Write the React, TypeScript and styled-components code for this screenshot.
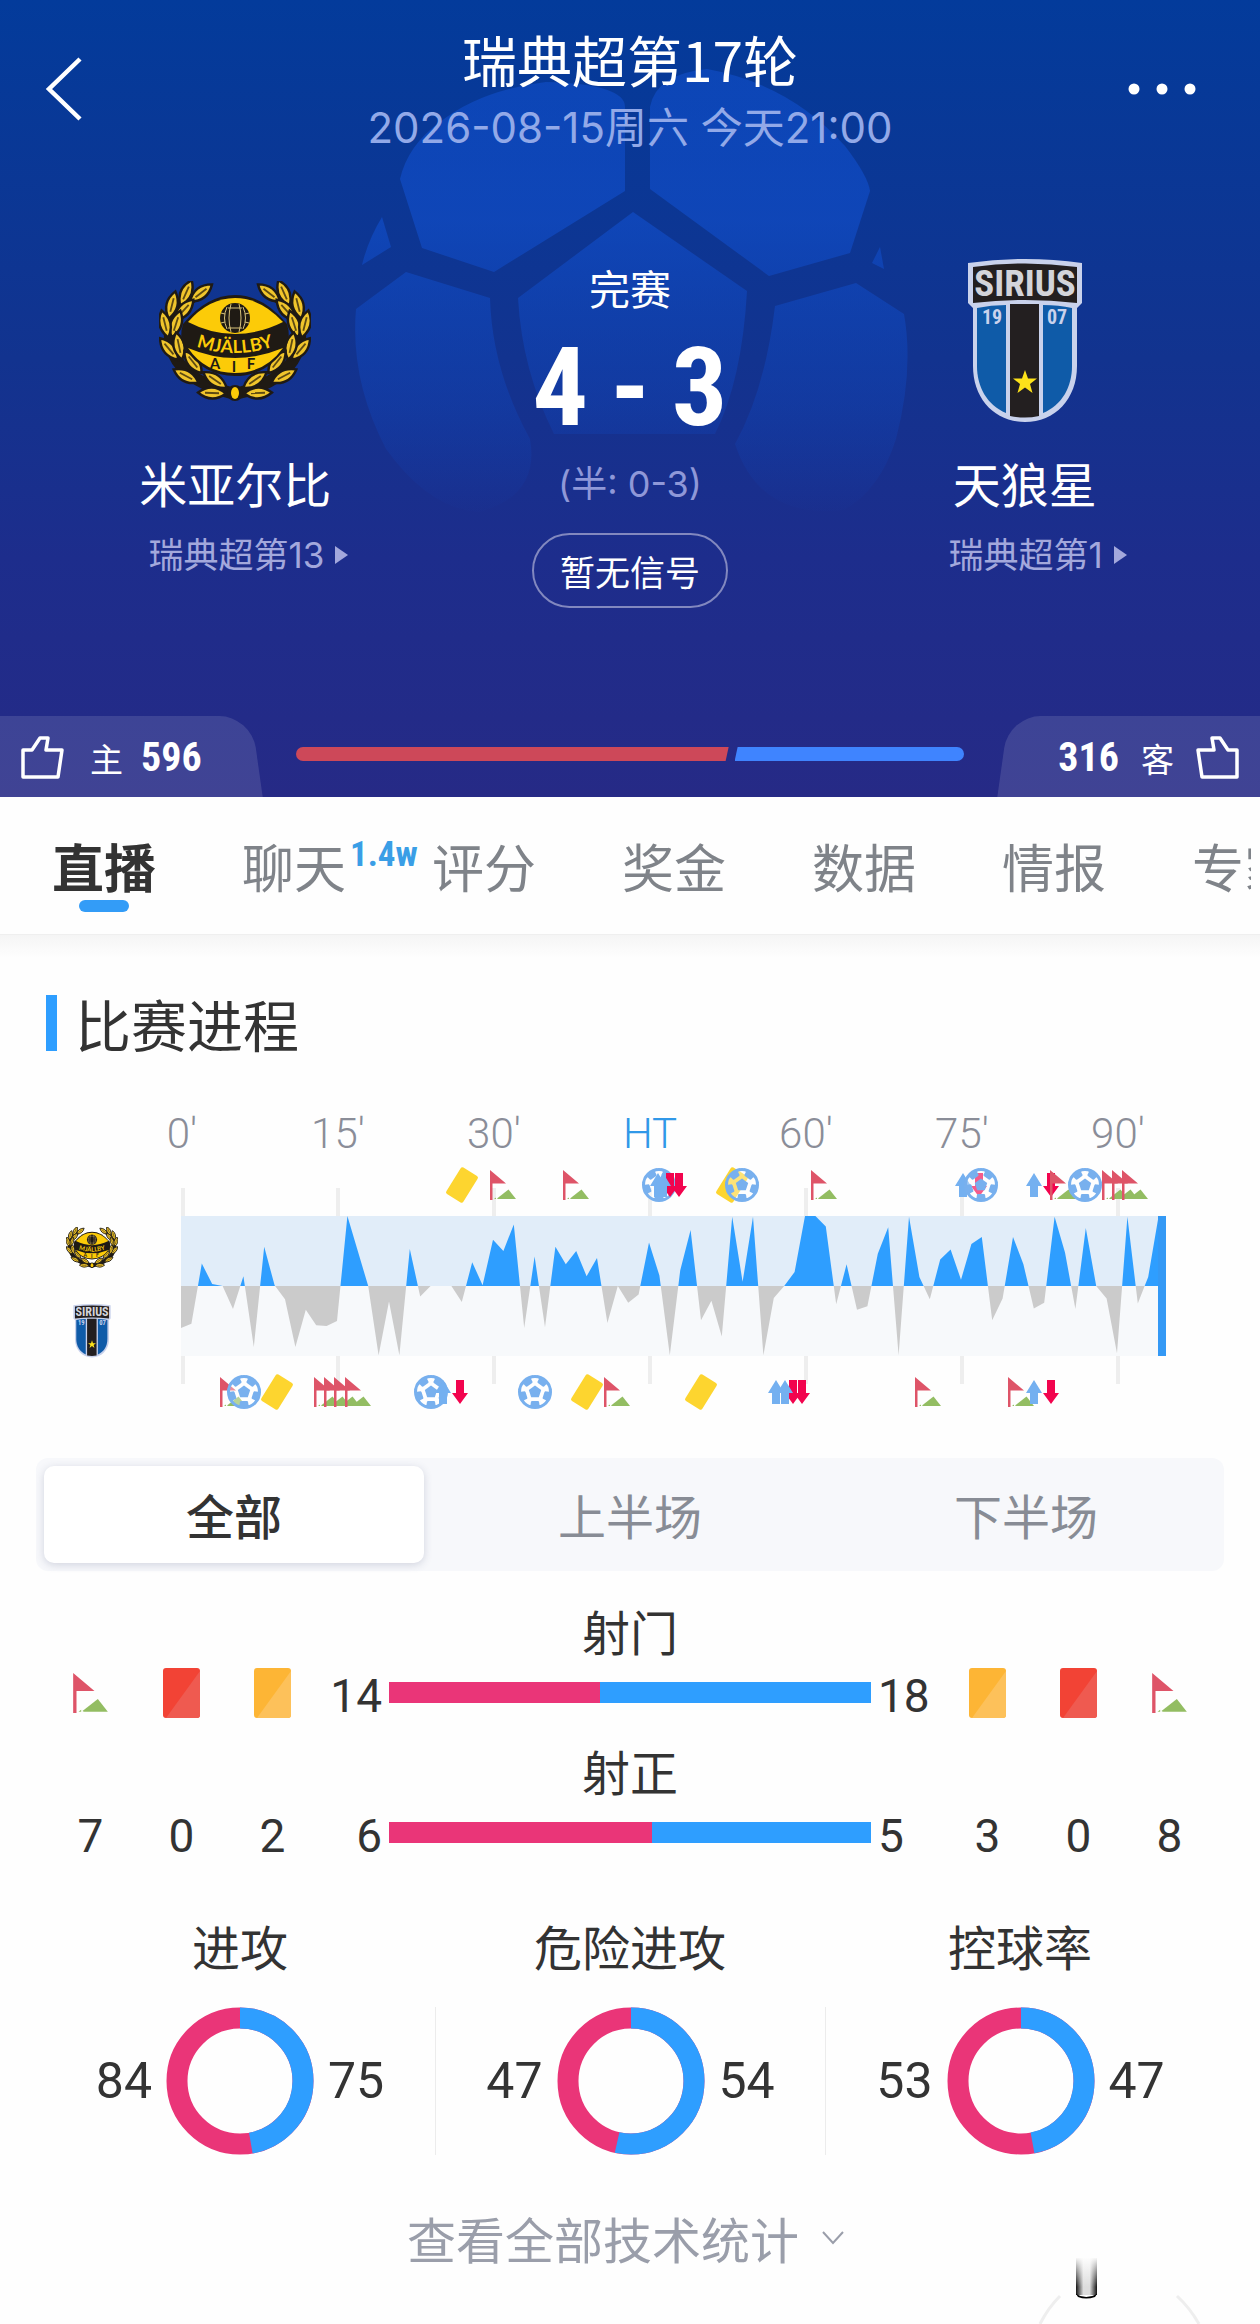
import * as React from 'react';
import { useState, useId } from 'react'
import styled, { createGlobalStyle } from 'styled-components'

const cjk = `"Noto Sans CJK SC", sans-serif`;
const narrow = `"Roboto Condensed", "Roboto", ${cjk}`;
const PINK = '#ea3578';
const BLUE = '#2e9eff';

const GlobalStyle = createGlobalStyle`
  * { box-sizing: border-box; }
  body {
    margin: 0;
    background: #fefefe;
    color: #333;
    font-family: "Inter", ${cjk};
  }
  h1, h2, h3, p { margin: 0; font-weight: 400; }
  a { color: inherit; text-decoration: none; }
  button {
    border: 0;
    padding: 0;
    background: none;
    color: inherit;
    font: inherit;
    cursor: pointer;
  }
  svg { display: block; }
`

const Page = styled.div`
  position: relative;
  overflow: hidden;
  padding-bottom: 56px;
`

/* ---------- hero ---------- */

const Hero = styled.header`
  position: relative;
  padding-top: 26px;
  color: #fff;
  background: linear-gradient(180deg, #033b9b 0%, #12338f 45%, #1d2d8c 70%, #262a86 100%);
`

const HeroBall = styled.svg`
  position: absolute;
  left: 50%;
  top: 60px;
  width: 560px;
  height: 460px;
  margin-left: -278px;
`

const TopBar = styled.div`
  position: relative;
  display: grid;
  grid-template-columns: 140px 1fr 140px;
  align-items: center;
`

const IconButton = styled.button<{ $end?: boolean }>`
  display: flex;
  justify-content: ${p => p.$end ? 'flex-end' : 'flex-start'};
  padding: ${p => p.$end ? '0 64px 0 0' : '0 0 0 44px'};

  svg { flex: none; }
`

const Titles = styled.div`
  text-align: center;

  h1 {
    font-family: ${cjk};
    font-size: 55px;
    line-height: 64px;
  }
  p {
    margin-top: 14px;
    font-size: 42px;
    line-height: 48px;
    color: #92a9e8;
  }
`

const Teams = styled.div`
  position: relative;
  display: grid;
  grid-template-columns: repeat(3, 1fr);
  margin-top: 107px;
  padding: 0 38px;
`

const Team = styled.section`
  display: flex;
  flex-direction: column;
  align-items: center;

  h2 {
    margin-top: 33px;
    font-size: 48px;
    line-height: 60px;
  }
`

const CrestBox = styled.div`
  display: flex;
  align-items: center;
  height: 164px;
`

const RankLink = styled.a`
  display: flex;
  align-items: center;
  gap: 11px;
  margin-top: 17px;
  padding-left: 26px;
  font-size: 35px;
  line-height: 44px;
  color: #a3a8dc;
`

const Center = styled.section`
  display: flex;
  flex-direction: column;
  align-items: center;
  padding-top: 7px;
`

const Status = styled.p`
  font-size: 41px;
  line-height: 48px;
`

const Score = styled.p`
  display: flex;
  gap: 22px;
  margin-top: 24px;
  font-family: ${narrow};
  font-weight: 700;
  font-size: 110px;
  line-height: 100px;
`

const Half = styled.p`
  margin-top: 24px;
  font-size: 36px;
  line-height: 44px;
  color: #8f98d8;
`

const Signal = styled.button`
  height: 75px;
  margin-top: 27px;
  padding: 0 26px;
  border: 2px solid #8288bf;
  border-radius: 38px;
  font-size: 35px;
`

const Votes = styled.div`
  position: relative;
  display: flex;
  align-items: center;
  justify-content: space-between;
  height: 81px;
  margin-top: 108px;
`

const Vote = styled.button<{ $away?: boolean }>`
  position: relative;
  display: flex;
  flex-direction: ${p => p.$away ? 'row-reverse' : 'row'};
  align-items: center;
  gap: ${p => p.$away ? 22 : 18}px;
  width: 263px;
  height: 81px;
  padding: 2px 20px 0;
  font-size: 33px;

  &::before {
    content: '';
    position: absolute;
    inset: 0 ${p => p.$away ? '-20px' : '6px'} 0 ${p => p.$away ? '6px' : '-20px'};
    background: rgba(255, 255, 255, 0.12);
    border-radius: ${p => p.$away ? '32px 0 0 0' : '0 32px 0 0'};
    transform: skewX(${p => p.$away ? '-8deg' : '8deg'});
  }
  svg, span, b { position: relative; }
  span { font-family: ${cjk}; }
  svg { margin: ${p => p.$away ? '0' : '0 8px 0 0'}; }
  b {
    font-family: ${narrow};
    font-size: 40px;
  }
`

const VoteTrack = styled.div`
  flex: 1;
  display: flex;
  gap: 6px;
  height: 14px;
  margin: 0 33px 5px;
`

const VoteFill = styled.div<{ $away?: boolean }>`
  background: ${p => p.$away ? '#3f84ff' : '#cd4859'};
  border-radius: ${p => p.$away ? '0 7px 7px 0' : '7px 0 0 7px'};
  clip-path: ${p => p.$away
    ? 'polygon(3px 0, 100% 0, 100% 100%, 0 100%)'
    : 'polygon(0 0, 100% 0, calc(100% - 3px) 100%, 0 100%)'};
`

/* ---------- tabs ---------- */

const TabBar = styled.nav`
  display: flex;
  height: 137px;
  margin-right: 9px;
  padding-left: 9px;
  overflow: hidden;
`

const TabItem = styled.button<{ $active: boolean }>`
  position: relative;
  flex: 0 0 190px;
  font-family: ${cjk};
  font-size: 52px;
  line-height: 137px;
  font-weight: ${p => p.$active ? 700 : 400};
  color: ${p => p.$active ? '#333' : '#7f8389'};

  &::after {
    content: '';
    display: ${p => p.$active ? 'block' : 'none'};
    position: absolute;
    left: 50%;
    bottom: 22px;
    width: 50px;
    height: 12px;
    margin-left: -25px;
    border-radius: 6px;
    background: #339cf7;
  }
  sup {
    position: absolute;
    left: 151px;
    top: 40px;
    font-family: ${narrow};
    font-size: 35px;
    line-height: 36px;
    font-weight: 700;
    color: #3a9ee6;
  }
`

const Shade = styled.div`
  height: 24px;
  border-top: 1px solid #efefef;
  background: linear-gradient(180deg, #f5f5f5, #fefefe);
`

/* ---------- match progress ---------- */

const SectionTitle = styled.h2`
  display: flex;
  align-items: center;
  gap: 18px;
  margin-top: 37px;
  padding-left: 46px;
  font-family: ${cjk};
  font-size: 56px;
  line-height: 56px;

  &::before {
    content: '';
    width: 11px;
    height: 56px;
    background: ${BLUE};
  }
`

const Timeline = styled.div`
  display: flex;
  margin-top: 49px;
  padding-right: 60px;
`

const TeamMarks = styled.div`
  flex: 0 0 160px;
  display: flex;
  flex-direction: column;
  align-items: center;
  gap: 36px;
  padding: 127px 0 0 24px;
`

const Chart = styled.svg`
  flex: 1;
  min-width: 0;
  width: 100%;

  text {
    font-family: "Roboto", sans-serif;
    font-weight: 300;
    font-size: 42px;
    text-anchor: middle;
    fill: #8a8d98;
  }
  text.ht { fill: #3098e8; }
`

const Segments = styled.div`
  display: grid;
  grid-template-columns: repeat(3, 1fr);
  margin: 38px 36px 0;
  padding: 8px 0;
  border-radius: 12px;
  background: #f7f8fb;
`

const Segment = styled.button<{ $active: boolean }>`
  margin: 0 8px;
  border-radius: 10px;
  font-family: ${cjk};
  font-size: 48px;
  line-height: 97px;
  font-weight: ${p => p.$active ? 500 : 400};
  color: ${p => p.$active ? '#333' : '#888c95'};
  background: ${p => p.$active ? '#fff' : 'none'};
  box-shadow: ${p => p.$active ? '0 2px 8px rgba(60, 70, 110, 0.2)' : 'none'};
`

/* ---------- stats ---------- */

const Stats = styled.div`
  margin-top: 15px;
`

const StatRow = styled.div`
  display: grid;
  grid-template-columns: repeat(3, 91px) 1fr repeat(3, 91px);
  align-items: end;
  height: 140px;
  padding: 0 45px;
  font-family: "Roboto", ${cjk};
  font-size: 46px;
`

const Cell = styled.div`
  display: flex;
  align-items: center;
  justify-content: center;
  height: 60px;

  svg { margin-bottom: 6px; }
`

const Duel = styled.div`
  h3 {
    text-align: center;
    font-size: 48px;
    line-height: 60px;
  }
`

const DuelLine = styled.div`
  display: grid;
  grid-template-columns: 64px 1fr 64px;
  gap: 7px;
  line-height: 60px;
  margin-top: 1px;

  > :first-child { text-align: right; }
`

const DuelBar = styled.div`
  display: flex;
  height: 21px;
  margin-top: 16px;
  background: ${BLUE};

  div { background: ${PINK}; }
`

const Donuts = styled.div`
  display: grid;
  grid-template-columns: repeat(3, 1fr);
  margin-top: 53px;
  padding: 0 45px;
`

const DonutCard = styled.section`
  h3 {
    text-align: center;
    font-size: 48px;
    line-height: 60px;
  }
  div {
    display: flex;
    align-items: center;
    justify-content: center;
    gap: 14px;
    margin-top: 28px;
    font-family: "Roboto", sans-serif;
    font-size: 50px;
    line-height: 60px;
  }
  & + & div { border-left: 1px solid #ececec; }
`

const More = styled.button`
  display: flex;
  align-items: center;
  justify-content: center;
  gap: 22px;
  width: 100%;
  margin-top: 53px;
  padding-right: 8px;
  font-family: ${cjk};
  font-size: 49px;
  line-height: 60px;
  color: #9a9eaa;
`

const FloatingMark = styled.svg`
  position: absolute;
  right: 50px;
  bottom: 0;
`

const LEAVES = [
  [40, 12, -38], [25, 12, -66], [23, 29, -48], [11, 24, -76], [15, 43, -72],
  [4, 43, 76], [8, 68, 50], [18, 65, 78], [25, 95, 28], [32, 81, 52], [51, 112, 2], [54, 99, 34],
];

const MjallbyCrest = ({ width }: { width: number }) => {
  const id = useId();
  const side = LEAVES.map(([x, y, r], i) => (
    <g key={i} transform={`translate(${x} ${y}) rotate(${r})`}>
      <path d="M-14 0Q0 -11 14 0Q0 11 -14 0Z" fill="#f0c52c" stroke="#1f1a14" strokeWidth="2.4" />
      <path d="M-7 0H7" stroke="#5d4a12" strokeWidth="1.8" />
    </g>
  ));
  return (
    <svg width={width} viewBox="-2 0 152 120" role="img" aria-label="Mjällby AIF">
      <path d="M34 14C-4 38 -4 94 70 112M114 14C152 38 152 94 78 112" fill="none" stroke="#1f1a14" strokeWidth="12" />
      {side}
      <g transform="translate(148 0) scale(-1 1)">{side}</g>
      <path d="M22 43Q46 14 74 14T126 43Q130 56 125 66Q106 95 74 95T23 66Q18 56 22 43Z" fill="#1f1a14" />
      <path d="M27 41Q48 17 74 17T122 41Q98 53 74 53T27 41Z" fill="#fccb08" />
      <path d="M27 67Q74 87 122 67Q104 92 74 92T27 67Z" fill="#fccb08" />
      <circle cx="74" cy="37" r="15" fill="#1f1a14" />
      <path d="M70 23Q66 37 70 51M78 23Q82 37 78 51M66 26Q61 37 66 48M82 26Q87 37 82 48M60 32L64 33M60 42L64 41M88 32L84 33M88 42L84 41M67 27H81M67 47H81" fill="none" stroke="#d8c27a" strokeWidth="1" />
      <path id={id} d="M26 62Q74 82 122 62" fill="none" />
      <text fontFamily="Lato, sans-serif" fontWeight="700" fontSize="18" fill="#fccb08" textAnchor="middle">
        <textPath href={`#${id}`} startOffset="50%">MJÄLLBY</textPath>
      </text>
      <g fontFamily="Lato, sans-serif" fontWeight="700" fontSize="15" fill="#1f1a14" textAnchor="middle">
        <text x="54" y="88">A</text>
        <text x="73" y="91">I</text>
        <text x="90" y="88">F</text>
      </g>
      <circle cx="74" cy="112" r="8" fill="#1f1a14" />
      <ellipse cx="74" cy="112" rx="4" ry="6" fill="#fccb08" />
    </svg>
  );
}

const SiriusCrest = ({ width }: { width: number }) => (
  <svg width={width} viewBox="0 0 116 164" role="img" aria-label="Sirius 1907">
    <path d="M1 4Q58 -4 115 4V44L110 49V107C110 140 88 163 58 163S6 140 6 107V49L1 44Z" fill="#c9d2ec" />
    <path d="M6 8Q58 1 110 8V44Q58 38 6 44Z" fill="#231f20" />
    <path d="M10 49Q24 46 39 46V154C20 146 10 128 10 107Z" fill="#0f5ba8" />
    <path d="M76 46Q92 46 105 49V107C105 128 95 146 76 154Z" fill="#0f5ba8" />
    <path d="M43 45H72V157Q58 160 43 157Z" fill="#231f20" />
    <text x="58" y="37" fontFamily={narrow} fontWeight="700" fontSize="37" fill="#d3d4da" textAnchor="middle">SIRIUS</text>
    <g fontFamily={narrow} fontWeight="700" fontSize="20" fill="#c9d2ec" textAnchor="middle">
      <text x="25" y="65">19</text>
      <text x="90" y="65">07</text>
    </g>
    <path d="M58 111L61 119.500H70L63 125L65.500 134L58 128.500L50.500 134L53 125L46 119.500H55Z" fill="#fde21a" />
  </svg>
)

const Thumb = ({ flip }: { flip?: boolean }) => (
  <svg width="44" height="44" viewBox="0 0 44 44" fill="none" stroke="#fff" strokeWidth="3.5" strokeLinejoin="round">
    <path transform={flip ? 'translate(44 0) scale(-1 1)' : undefined} d="M3 14H12L20 2H28L26 14H42L38 41H3Z" />
  </svg>
)

const Card = ({ color, light }: { color: string, light: string }) => (
  <svg width="37" height="50" viewBox="0 0 37 50">
    <rect width="37" height="50" rx="3" fill={color} />
    <path d="M37 3V47Q37 50 34 50H3Z" fill={light} />
  </svg>
)

const FlagShape = () => (
  <>
    <path d="M0 0L16 13.500H2.500V30H0Z" fill="#de5468" />
    <path d="M7 28.500L18.500 19.500L26 29H8Z" fill="#93bd62" />
    <path d="M4 29L6 27.500V29Z" fill="#93bd62" />
  </>
)

const Flag = () => (
  <svg width="35" height="40" viewBox="0 0 26 30"><FlagShape /></svg>
)

// momentum per minute: above zero is home pressure, below zero is away
const MOMENTUM = [
  -60, -54, 32, 3, 0, -33, 14, -87, 56, 1, -19, -87, -34, -56, -57, -50, 100, 50, 0, -99,
  -22, -99, 53, -15, 0, 0, 0, -23, 34, 1, 66, 50, 88, -60, 42, -59, 56, 31, 50, 14,
  40, -53, 0, -24, -12, 62, 15, -99, 22, 80, -49, -21, -72, 99, 6, 99, -99, -17, 0, 20,
  100, 100, 85, -26, 31, -34, -29, 46, 84, -99, 99, 13, -19, 38, 52, 9, 60, 70, -49, -18,
  70, 31, -32, -24, 99, 48, -33, 83, 0, -18, -96, 99, -25, 13, 100,
];

const TICKS = ["0′", "15′", "30′", "HT", "60′", "75′", "90′"];

type EventKind = 'flag' | 'card' | 'ball' | 'up' | 'down';

const HOME_EVENTS: [EventKind, number][] = [
  ['card', 302], ['flag', 330], ['flag', 403], ['ball', 499], ['up', 498], ['down', 510], ['up', 503], ['down', 519],
  ['card', 572], ['ball', 582], ['flag', 651], ['up', 803], ['down', 819], ['ball', 821],
  ['up', 874], ['down', 891], ['flag', 890], ['ball', 925], ['flag', 942], ['flag', 952], ['flag', 962],
];

const AWAY_EVENTS: [EventKind, number][] = [
  ['flag', 60], ['ball', 84], ['card', 117], ['flag', 154], ['flag', 164], ['flag', 174], ['flag', 185],
  ['ball', 271], ['up', 283], ['down', 300], ['ball', 375], ['card', 427], ['flag', 444], ['card', 541],
  ['down', 633], ['up', 616], ['up', 625], ['down', 642], ['flag', 755], ['flag', 848], ['up', 874], ['down', 891],
];

const EventIcon = ({ kind }: { kind: EventKind }) => {
  if (kind === 'flag') return <g transform="translate(0 -15)"><FlagShape /></g>;
  if (kind === 'card') return <rect x="-10" y="-15.500" width="20" height="31" rx="2" fill="#fdd52f" transform="rotate(32)" />;
  if (kind === 'up') return <path d="M0 -12L8 1H4V12H-4V1H-8Z" fill="#74b0f0" />;
  if (kind === 'down') return <path d="M0 12L8 1H4V-12H-4V1H-8Z" fill="#f2044e" />;
  return (
    <g fill="#78b0ee">
      <circle r="15.500" fill="#fff" fillOpacity="0.35" stroke="#78b0ee" strokeWidth="3" />
      {[36, 108, 180, 252, 324].map(a => (
        <path key={a} d="M-4 -9.500L-3 -9H3L4 -9.500L4.500 -13L8 -13.500V-15H-8V-13.500L-4.500 -13Z" transform={`rotate(${a})`} />
      ))}
      <path d="M0 -6.500L6.200 -2L3.800 5.300H-3.800L-6.200 -2Z" />
    </g>
  );
}

const MomentumChart = () => {
  const id = useId();
  const line = MOMENTUM.map((v, i) => `L${(21 + i * 10.4).toFixed(1)} ${(186 - v * 0.7).toFixed(1)}`).join('');
  const area = `M21 186${line}V186Z`;
  return (
    <Chart viewBox="0 0 1040 320">
      <clipPath id={id + 'u'}><rect x="21" y="116" width="980" height="70" /></clipPath>
      <clipPath id={id + 'd'}><rect x="21" y="186" width="980" height="70" /></clipPath>
      {TICKS.map((t, i) => (
        <g key={t}>
          <rect x={21 + i * 156 - (i ? 1 : 0)} y="88" width="4" height="196" fill="#eeeeee" />
          <text x={22 + i * 156} y="48" className={t === 'HT' ? 'ht' : undefined}>{t}</text>
        </g>
      ))}
      <rect x="21" y="116" width="978" height="70" fill="#e1edf9" />
      <rect x="21" y="186" width="978" height="70" fill="#f7f9fb" />
      <path d={area} fill={BLUE} clipPath={`url(#${id}u)`} />
      <path d={area} fill="#cbcbcb" clipPath={`url(#${id}d)`} />
      <rect x="998" y="116" width="8" height="140" fill="#3499f5" />
      {HOME_EVENTS.map(([kind, x], i) => (
        <g key={i} transform={`translate(${x} 85)`}><EventIcon kind={kind} /></g>
      ))}
      {AWAY_EVENTS.map(([kind, x], i) => (
        <g key={i} transform={`translate(${x} 292)`}><EventIcon kind={kind} /></g>
      ))}
    </Chart>
  );
}

const Donut = ({ home, away }: { home: number, away: number }) => {
  const c = 2 * Math.PI * 63;
  return (
    <svg width="148" height="148" viewBox="-74 -74 148 148" fill="none" strokeWidth="21">
      <circle r="63" stroke={PINK} />
      <circle r="63" stroke={BLUE} strokeDasharray={`${c * away / (home + away)} ${c}`} transform="rotate(-90)" />
    </svg>
  );
}

const TABS = ["直播", "聊天", "评分", "奖金", "数据", "情报", "专家"];
const PERIODS = ["全部", "上半场", "下半场"];
const DONUTS = [
  { label: "进攻", home: 84, away: 75 },
  { label: "危险进攻", home: 47, away: 54 },
  { label: "控球率", home: 53, away: 47 },
];

const RankArrow = () => (
  <svg width="13" height="18" viewBox="0 0 13 18"><path d="M0 0L13 9L0 18Z" fill="#a3a8dc" /></svg>
)

const App = () => {
  const [tab, setTab] = useState(TABS[0]);
  const [period, setPeriod] = useState(PERIODS[0]);

  return (
    <Page>
      <GlobalStyle />
      <Hero>
        <HeroBall viewBox="352 60 560 460">
          <defs>
            <linearGradient id="ball" gradientUnits="userSpaceOnUse" x1="0" y1="60" x2="0" y2="520">
              <stop offset="0" stopColor="#1150cf" stopOpacity="0.55" />
              <stop offset="0.35" stopColor="#1150cf" stopOpacity="0.6" />
              <stop offset="0.75" stopColor="#1048c0" stopOpacity="0.35" />
              <stop offset="1" stopColor="#1048c0" stopOpacity="0" />
            </linearGradient>
          </defs>
          <g fill="url(#ball)">
            <path d="M400 179Q408 145 440 122Q480 90 546 82Q625 84 625 107V191L494 272L422 248Z" />
            <path d="M650 189V107Q656 74 707 69Q790 84 845 146Q868 176 870 191L850 253L769 276Z" />
            <path d="M633 212L747 291Q742 380 715 434H554Q522 370 518 298Z" />
            <path d="M406 272L490 298Q492 370 530 439Q540 495 480 512Q430 510 386 449Q350 380 356 309Z" />
            <path d="M856 283L904 314Q914 370 896 439Q880 490 844 510Q760 520 735 444Q765 390 775 306Z" />
            <path d="M382 217L391 247L362 265Q368 240 382 217Z" />
            <path d="M880 247L884 269L872 263Z" />
          </g>
        </HeroBall>
        <TopBar>
          <IconButton aria-label="返回">
            <svg width="40" height="64" viewBox="0 0 40 64" fill="none" stroke="#fff" strokeWidth="4.500">
              <path d="M36 2L5 32L36 62" />
            </svg>
          </IconButton>
          <Titles>
            <h1>瑞典超第17轮</h1>
            <p>2026-08-15周六 今天21:00</p>
          </Titles>
          <IconButton $end aria-label="更多">
            <svg width="68" height="12" viewBox="0 0 68 12" fill="#fff">
              <circle cx="6" cy="6" r="5.500" /><circle cx="34" cy="6" r="5.500" /><circle cx="62" cy="6" r="5.500" />
            </svg>
          </IconButton>
        </TopBar>

        <Teams>
          <Team>
            <CrestBox><MjallbyCrest width={152} /></CrestBox>
            <h2>米亚尔比</h2>
            <RankLink href="#home">瑞典超第13<RankArrow /></RankLink>
          </Team>
          <Center>
            <Status>完赛</Status>
            <Score><span>4</span><span>-</span><span>3</span></Score>
            <Half>(半: 0-3)</Half>
            <Signal>暂无信号</Signal>
          </Center>
          <Team>
            <CrestBox><SiriusCrest width={116} /></CrestBox>
            <h2>天狼星</h2>
            <RankLink href="#away">瑞典超第1<RankArrow /></RankLink>
          </Team>
        </Teams>

        <Votes>
          <Vote><Thumb /><span>主</span><b>596</b></Vote>
          <VoteTrack>
            <VoteFill style={{ flex: 596 }} />
            <VoteFill $away style={{ flex: 316 }} />
          </VoteTrack>
          <Vote $away><Thumb flip /><span>客</span><b>316</b></Vote>
        </Votes>
      </Hero>

      <TabBar>
        {TABS.map(t => (
          <TabItem key={t} $active={t === tab} onClick={() => setTab(t)}>
            {t}
            {t === "聊天" ? <sup>1.4w</sup> : ""}
          </TabItem>
        ))}
      </TabBar>
      <Shade />

      <SectionTitle>比赛进程</SectionTitle>
      <Timeline>
        <TeamMarks>
          <MjallbyCrest width={52} />
          <SiriusCrest width={38} />
        </TeamMarks>
        <MomentumChart />
      </Timeline>

      <Segments>
        {PERIODS.map(p => (
          <Segment key={p} $active={p === period} onClick={() => setPeriod(p)}>{p}</Segment>
        ))}
      </Segments>

      <Stats>
        <StatRow>
          <Cell><Flag /></Cell>
          <Cell><Card color="#f24335" light="#ef5a50" /></Cell>
          <Cell><Card color="#fdb535" light="#fdc15a" /></Cell>
          <Duel>
            <h3>射门</h3>
            <DuelLine>
              <span>14</span>
              <DuelBar><div style={{ width: `${14 / 32 * 100}%` }} /></DuelBar>
              <span>18</span>
            </DuelLine>
          </Duel>
          <Cell><Card color="#fdb535" light="#fdc15a" /></Cell>
          <Cell><Card color="#f24335" light="#ef5a50" /></Cell>
          <Cell><Flag /></Cell>
        </StatRow>
        <StatRow>
          <Cell>7</Cell>
          <Cell>0</Cell>
          <Cell>2</Cell>
          <Duel>
            <h3>射正</h3>
            <DuelLine>
              <span>6</span>
              <DuelBar><div style={{ width: `${6 / 11 * 100}%` }} /></DuelBar>
              <span>5</span>
            </DuelLine>
          </Duel>
          <Cell>3</Cell>
          <Cell>0</Cell>
          <Cell>8</Cell>
        </StatRow>
      </Stats>

      <Donuts>
        {DONUTS.map(d => (
          <DonutCard key={d.label}>
            <h3>{d.label}</h3>
            <div>
              <span>{d.home}</span>
              <Donut home={d.home} away={d.away} />
              <span>{d.away}</span>
            </div>
          </DonutCard>
        ))}
      </Donuts>

      <More>
        查看全部技术统计
        <svg width="24" height="16" viewBox="0 0 24 16" fill="none" stroke="#9a9eaa" strokeWidth="2">
          <path d="M2 2L12 13L22 2" />
        </svg>
      </More>

      <FloatingMark width="180" height="70" viewBox="0 0 180 70" aria-hidden="true">
        <defs>
          <linearGradient id="stem">
            <stop offset="0" stopColor="#111" />
            <stop offset="0.35" stopColor="#ddd" />
            <stop offset="0.65" stopColor="#ddd" />
            <stop offset="1" stopColor="#111" />
          </linearGradient>
          <linearGradient id="fade" x2="0" y2="1">
            <stop offset="0" stopColor="#fefefe" />
            <stop offset="1" stopColor="#fefefe" stopOpacity="0" />
          </linearGradient>
        </defs>
        <path d="M10 70Q18 54 30 42M147 42Q160 54 169 70" fill="none" stroke="#eee" strokeWidth="3" />
        <rect x="46" y="4" width="21" height="37" fill="url(#stem)" />
        <rect x="45" y="3" width="23" height="30" fill="url(#fade)" />
        <path d="M46 40Q56 46 67 40L65 43Q56 46 48 43Z" fill="#000" />
      </FloatingMark>
    </Page>
  );
}

export default App;
